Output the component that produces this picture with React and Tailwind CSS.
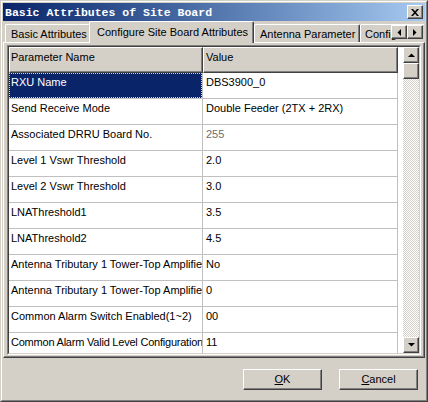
import React from "react";

const rows = [
  ["RXU Name", "DBS3900_0"],
  ["Send Receive Mode", "Double Feeder (2TX + 2RX)"],
  ["Associated DRRU Board No.", "255", true],
  ["Level 1 Vswr Threshold", "2.0"],
  ["Level 2 Vswr Threshold", "3.0"],
  ["LNAThreshold1", "3.5"],
  ["LNAThreshold2", "4.5"],
  ["Antenna Tributary 1 Tower-Top Amplifier", "No"],
  ["Antenna Tributary 1 Tower-Top Amplifier", "0"],
  ["Common Alarm Switch Enabled(1~2)", "00"],
  ["Common Alarm Valid Level Configuration", "11", false, true],
];

const raised =
  "bg-[#d4d0c8] border border-t-white border-l-white border-r-[#404040] border-b-[#404040] shadow-[inset_-1px_-1px_0_#808080]";

function Tri({ dir }) {
  const pts = {
    up: "0,4 3.5,0.5 7,4",
    down: "0,0 7,0 3.5,3.5",
    left: "4,0 4,7 0.5,3.5",
    right: "0,0 0,7 3.5,3.5",
  }[dir];
  const w = dir === "up" || dir === "down" ? 7 : 4;
  const h = dir === "up" || dir === "down" ? 4 : 7;
  return (
    <svg width={w} height={h} viewBox={`0 0 ${w} ${h}`}>
      <polygon points={pts} fill="#000" />
    </svg>
  );
}

export default function App() {
  return (
    <div className="relative w-[428px] h-[402px] overflow-hidden bg-[#d4d0c8] border border-t-[#d4d0c8] border-l-[#d4d0c8] border-r-[#404040] border-b-[#404040] font-['Liberation_Sans',Arial,sans-serif] text-[11px] leading-[13px] text-black">
      <div className="h-full flex flex-col border border-t-white border-l-white border-r-[#808080] border-b-[#808080] p-px">
        {/* Title bar */}
        <div className="h-[18px] shrink-0 flex items-center justify-between bg-gradient-to-r from-[#0a246a] to-[#a6caf0] pl-[2px] pr-[2px]">
          <span className="font-['Liberation_Mono',monospace] font-bold text-[11.5px] leading-[13px] text-white whitespace-nowrap">
            Basic Attributes of Site Board
          </span>
          <div className={`w-[16px] h-[14px] flex items-center justify-center ${raised}`}>
            <svg width="8" height="7" viewBox="0 0 8 7">
              <path d="M0 0h2l2 2.3l2-2.3h2l-3 3.5l3 3.5h-2l-2-2.3l-2 2.3h-2l3-3.5z" fill="#000" />
            </svg>
          </div>
        </div>

        {/* Tab strip */}
        <div className="relative h-[21px] shrink-0 flex items-end pl-[2px]">
          <div className="h-[18px] w-[86px] shrink-0 flex items-center pl-[5px] pt-px whitespace-nowrap border-l border-t border-l-white border-t-white border-r border-r-[#404040] shadow-[inset_-1px_0_0_#808080] rounded-tl-[2px] rounded-tr-[2px]">
            Basic Attributes
          </div>
          <div className="relative z-10 h-[22px] -mb-[1px] w-[165px] -ml-[2px] shrink-0 flex items-start pt-[4px] pl-[7px] whitespace-nowrap bg-[#d4d0c8] border-l border-t border-l-white border-t-white border-r border-r-[#404040] shadow-[inset_-1px_0_0_#808080] rounded-tl-[2px] rounded-tr-[2px]">
            Configure Site Board Attributes
          </div>
          <div className="h-[18px] w-[106px] shrink-0 flex items-center pl-[5px] pt-px whitespace-nowrap border-l border-t border-l-white border-t-white border-r border-r-[#404040] shadow-[inset_-1px_0_0_#808080] rounded-tl-[2px] rounded-tr-[2px]">
            Antenna Parameter
          </div>
          <div className="h-[18px] w-[64px] shrink-0 flex items-center pl-[4px] pt-px whitespace-nowrap overflow-hidden border-l border-t border-l-white border-t-white rounded-tl-[2px]">
            Configure
          </div>
          <div className="absolute left-[388px] top-[4px] flex">
            <div className={`w-[16px] h-[14px] flex items-center justify-center ${raised}`}>
              <Tri dir="left" />
            </div>
            <div className={`w-[16px] h-[14px] flex items-center justify-center ${raised}`}>
              <Tri dir="right" />
            </div>
          </div>
        </div>

        {/* Tab panel */}
        <div className="h-[316px] shrink-0 border border-t-white border-l-white border-r-[#404040] border-b-[#404040] shadow-[inset_-1px_-1px_0_#808080] pt-[2px] pl-[3px] pr-[3px] pb-[2px]">
          <div className="h-full border border-t-[#808080] border-l-[#808080] border-r-white border-b-white">
            <div className="h-full flex bg-white border border-t-[#404040] border-l-[#404040] border-r-[#d4d0c8] border-b-[#d4d0c8] overflow-hidden">
              {/* Grid */}
              <div className="flex-1 flex flex-col overflow-hidden">
                <div className="h-[26px] shrink-0 flex">
                  <div className={`w-[194px] shrink-0 pl-[1px] pt-[3px] ${raised}`}>Parameter Name</div>
                  <div className={`w-[195px] shrink-0 pl-[2px] pt-[3px] ${raised}`}>Value</div>
                </div>
                {rows.map(([name, value, gray, tight], i) => (
                  <div key={i} className="h-[26px] shrink-0 flex">
                    <div className="w-[194px] shrink-0 border-r border-b border-[#c0c0c0] overflow-hidden whitespace-nowrap">
                      {i === 0 ? (
                        <div className="h-full bg-[#0a246a] text-white border border-dotted border-[#e4d98a] pl-[1px] pt-[2px]">
                          {name}
                        </div>
                      ) : (
                        <div className={`pl-[2px] pt-[3px] ${tight ? "tracking-[-0.22px]" : ""}`}>{name}</div>
                      )}
                    </div>
                    <div
                      className={`w-[195px] shrink-0 border-r border-b border-[#c0c0c0] pl-[3px] pt-[3px] whitespace-nowrap ${
                        gray ? "text-[#6e6e6e]" : ""
                      }`}
                    >
                      {value}
                    </div>
                  </div>
                ))}
              </div>
              {/* Scrollbar */}
              <div className="w-[16px] shrink-0 flex flex-col">
                <div className={`h-[16px] shrink-0 flex items-center justify-center ${raised}`}>
                  <Tri dir="up" />
                </div>
                <div className={`h-[16px] shrink-0 ${raised}`} />
                <div className="flex-1 bg-[image:repeating-conic-gradient(#ffffff_0_25%,#d4d0c8_0_50%)] bg-[length:2px_2px]" />
                <div className={`h-[16px] shrink-0 flex items-center justify-center ${raised}`}>
                  <Tri dir="down" />
                </div>
              </div>
            </div>
          </div>
        </div>

        {/* Buttons */}
        <div className="flex-1 flex items-start justify-end gap-[17px] pt-[11px] pr-[7px]">
          <div className={`w-[79px] h-[21px] flex items-center justify-center ${raised}`}>
            <span>
              <span className="underline">O</span>K
            </span>
          </div>
          <div className={`w-[79px] h-[21px] flex items-center justify-center ${raised}`}>
            <span>
              <span className="underline">C</span>ancel
            </span>
          </div>
        </div>
      </div>
    </div>
  );
}
